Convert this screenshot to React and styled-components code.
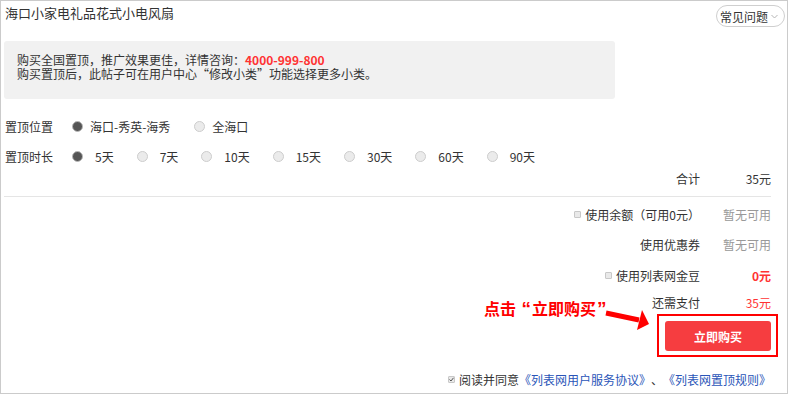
import React from 'react';
import styled, { createGlobalStyle } from 'styled-components';

const Global = createGlobalStyle`
  html, body { margin: 0; padding: 0; background: #fff; }
  body { font-family: "Noto Sans CJK SC", "Microsoft YaHei", sans-serif; color: #333; }
`;

const Page = styled.div`
  position: relative;
  width: 788px;
  height: 394px;
  box-sizing: border-box;
  border: 1px solid #cbcbcb;
  background: #fff;
  font-size: 12px;
  color: #333;
  overflow: hidden;
`;

const Header = styled.div`
  display: flex;
  justify-content: space-between;
  align-items: flex-start;
  height: 40px;
  box-sizing: border-box;
  padding: 3px 2px 0 4px;
`;

const Title = styled.h1`
  margin: 0;
  font-size: 13px;
  font-weight: normal;
  line-height: 18px;
  color: #333;
`;

const FaqPill = styled.div`
  display: flex;
  align-items: center;
  gap: 3px;
  height: 22px;
  box-sizing: border-box;
  margin-top: 1px;
  padding: 0 6px 0 3px;
  border: 1px solid #cfcfcf;
  border-radius: 11px;
  font-size: 12px;
  color: #333;
`;

const Notice = styled.div`
  margin-left: 3px;
  width: 611px;
  height: 58px;
  box-sizing: border-box;
  padding: 12px 13px 0;
  background: #f1f1f1;
  border-radius: 3px;
  font-size: 12px;
  color: #333;
`;

const NoticeLine = styled.div`
  height: 14px;
  line-height: 14px;
  white-space: nowrap;
`;

const Hot = styled.span`
  color: #f33;
  font-weight: bold;
`;

const Options = styled.div`
  margin-top: 12px;
  padding-left: 4px;
`;

const OptionRow = styled.div`
  display: flex;
  align-items: center;
  height: 30px;
`;

const RowLabel = styled.span`
  width: 67px;
  flex-shrink: 0;
`;

const Option = styled.label`
  display: flex;
  align-items: center;
  margin-right: ${p => p.$trail}px;
`;

const Radio = styled.span`
  width: 11px;
  height: 11px;
  box-sizing: border-box;
  border-radius: 50%;
  border: 1px solid ${p => (p.$on ? '#b8b8b8' : '#cdcdcd')};
  background: ${p => (p.$on ? '#555' : '#ebebeb')};
  margin-right: ${p => p.$gap}px;
`;

const SumRow = styled.div`
  display: flex;
  justify-content: flex-end;
  align-items: center;
  height: ${p => p.$h}px;
  padding-right: 16px;
`;

const SumLabel = styled.span`
  display: flex;
  align-items: center;
  margin-right: 23px;
`;

const SumValue = styled.span`
  width: 48px;
  text-align: right;
  color: ${p => (p.$red ? '#f33' : p.$muted ? '#999' : '#333')};
  font-weight: ${p => (p.$bold ? 'bold' : 'normal')};
`;

const Divider = styled.div`
  height: 1px;
  margin: 11px 16px 0 3px;
  background: #e5e5e5;
`;

const Check = styled.span`
  display: inline-flex;
  align-items: center;
  justify-content: center;
  width: 7px;
  height: 7px;
  box-sizing: border-box;
  border: 1px solid #c8c8c8;
  background: #e9e9e9;
  border-radius: 1px;
  margin-right: 4px;
`;

const ActionRow = styled.div`
  display: flex;
  justify-content: flex-end;
  margin-top: 3px;
  padding-right: 9px;
`;

const ButtonFrame = styled.div`
  border: 2px solid #f00;
  padding: 5px 5px 4px 6px;
`;

const BuyButton = styled.button`
  display: block;
  width: 106px;
  height: 30px;
  border: none;
  border-radius: 3px;
  background: #f63d40;
  color: #fff;
  font-family: inherit;
  font-size: 12px;
  font-weight: bold;
  cursor: pointer;
`;

const Callout = styled.div`
  position: absolute;
  left: 483px;
  top: 298px;
  font-family: "Liberation Sans", "Noto Sans CJK SC", sans-serif;
  font-size: 16px;
  line-height: 20px;
  font-weight: bold;
  color: #f00;
  white-space: nowrap;
`;

const Quote = styled.span`
  display: inline-block;
  font-size: 19px;
  margin: 0 1px;
`;

const CalloutArrow = styled.svg`
  position: absolute;
  left: 600px;
  top: 304px;
`;

const Footer = styled.div`
  display: flex;
  justify-content: flex-end;
  align-items: center;
  height: 20px;
  margin-top: 12px;
  padding-right: 16px;
`;

const Link = styled.a`
  color: #2a55b8;
  text-decoration: none;
`;

const durations = ['5天', '7天', '10天', '15天', '30天', '60天', '90天'];

export default function App() {
  return (
    <>
      <Global />
      <Page>
        <Header>
          <Title>海口小家电礼品花式小电风扇</Title>
          <FaqPill>
            常见问题
            <svg width="7" height="5" viewBox="0 0 7 5">
              <polyline points="0.5,1 3.5,4 6.5,1" fill="none" stroke="#b5b5b5" strokeWidth="1" />
            </svg>
          </FaqPill>
        </Header>

        <Notice>
          <NoticeLine>
            购买全国置顶，推广效果更佳，详情咨询：<Hot>4000-999-800</Hot>
          </NoticeLine>
          <NoticeLine>购买置顶后，此帖子可在用户中心“修改小类”功能选择更多小类。</NoticeLine>
        </Notice>

        <Options>
          <OptionRow>
            <RowLabel>置顶位置</RowLabel>
            <Option $trail={24}>
              <Radio $on $gap={7} />
              海口-秀英-海秀
            </Option>
            <Option $trail={24}>
              <Radio $gap={7} />
              全海口
            </Option>
          </OptionRow>
          <OptionRow>
            <RowLabel>置顶时长</RowLabel>
            {durations.map((d, i) => (
              <Option key={d} $trail={23}>
                <Radio $on={i === 0} $gap={12} />
                {d}
              </Option>
            ))}
          </OptionRow>
        </Options>

        <SumRow $h={14}>
          <SumLabel>合计</SumLabel>
          <SumValue>35元</SumValue>
        </SumRow>

        <Divider />

        <SumRow $h={34}>
          <SumLabel>
            <Check />
            使用余额（可用0元）
          </SumLabel>
          <SumValue $muted>暂无可用</SumValue>
        </SumRow>
        <SumRow $h={26}>
          <SumLabel>使用优惠券</SumLabel>
          <SumValue $muted>暂无可用</SumValue>
        </SumRow>
        <SumRow $h={36}>
          <SumLabel>
            <Check />
            使用列表网金豆
          </SumLabel>
          <SumValue $red $bold>0元</SumValue>
        </SumRow>
        <SumRow $h={18}>
          <SumLabel>还需支付</SumLabel>
          <SumValue $red>35元</SumValue>
        </SumRow>

        <ActionRow>
          <ButtonFrame>
            <BuyButton>立即购买</BuyButton>
          </ButtonFrame>
        </ActionRow>

        <Footer>
          <Check>
            <svg width="5" height="5" viewBox="0 0 5 5">
              <polyline points="0.5,2.5 2,4 4.5,0.8" fill="none" stroke="#555" strokeWidth="1" />
            </svg>
          </Check>
          阅读并同意<Link href="#">《列表网用户服务协议》</Link>、<Link href="#">《列表网置顶规则》</Link>
        </Footer>

        <Callout>
          点击 <Quote>“</Quote>立即购买<Quote>”</Quote>
        </Callout>
        <CalloutArrow width="52" height="30" viewBox="0 0 52 30">
          <line x1="5" y1="8" x2="38" y2="15" stroke="#f00" strokeWidth="5" />
          <polygon points="48,19 41,5 36,25" fill="#f00" />
        </CalloutArrow>
      </Page>
    </>
  );
}
